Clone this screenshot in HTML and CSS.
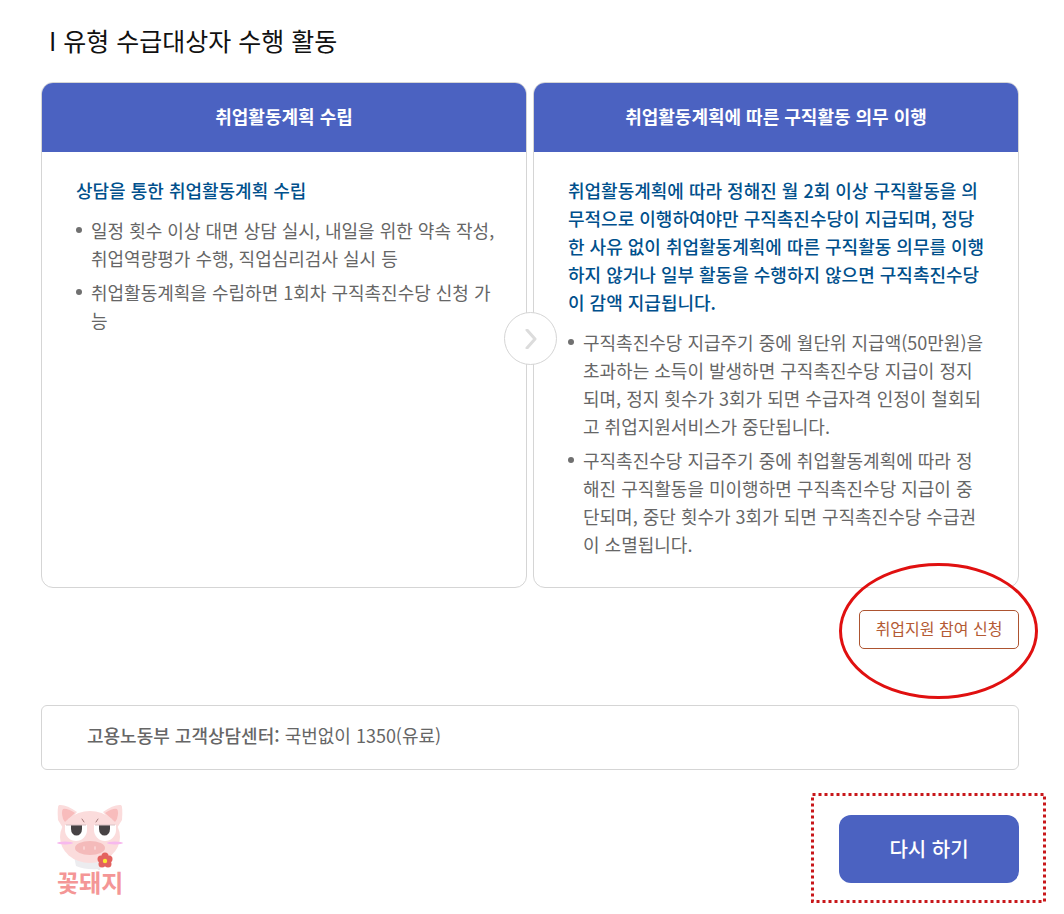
FILE: index.html
```html
<!DOCTYPE html>
<html lang="ko">
<head>
    <meta charset="UTF-8">
    <meta name="viewport" content="width=device-width, initial-scale=1.0">
    <title>I 유형 수급대상자 수행 활동</title>
    <link rel="stylesheet" href="styles.css">
</head>
<body>
    <main>
        <h1>I 유형 수급대상자 수행 활동</h1>

        <div class="steps">
            <section class="card">
                <h2>취업활동계획 수립</h2>
                <div class="card-body">
                    <p class="lead">상담을 통한 취업활동계획 수립</p>
                    <ul>
                        <li>일정 횟수 이상 대면 상담 실시, 내일을 위한 약속 작성, 취업역량평가 수행, 직업심리검사 실시 등</li>
                        <li>취업활동계획을 수립하면 1회차 구직촉진수당 신청 가능</li>
                    </ul>
                </div>
            </section>
            <section class="card">
                <h2>취업활동계획에 따른 구직활동 의무 이행</h2>
                <div class="card-body">
                    <p class="lead">취업활동계획에 따라 정해진 월 2회 이상 구직활동을 의무적으로 이행하여야만 구직촉진수당이 지급되며, 정당한 사유 없이 취업활동계획에 따른 구직활동 의무를 이행하지 않거나 일부 활동을 수행하지 않으면 구직촉진수당이 감액 지급됩니다.</p>
                    <ul>
                        <li>구직촉진수당 지급주기 중에 월단위 지급액(50만원)을 초과하는 소득이 발생하면 구직촉진수당 지급이 정지되며, 정지 횟수가 3회가 되면 수급자격 인정이 철회되고 취업지원서비스가 중단됩니다.</li>
                        <li>구직촉진수당 지급주기 중에 취업활동계획에 따라 정해진 구직활동을 미이행하면 구직촉진수당 지급이 중단되며, 중단 횟수가 3회가 되면 구직촉진수당 수급권이 소멸됩니다.</li>
                    </ul>
                </div>
            </section>
            <span class="arrow">
                <svg width="12" height="20" viewBox="0 0 12 20" fill="none" stroke="#dcdcdc" stroke-width="3" stroke-linecap="round" stroke-linejoin="round"><path d="M2 1l8 9-8 9"/></svg>
            </span>
        </div>

        <div class="apply">
            <div class="apply-wrap">
                <button type="button" class="btn-apply">취업지원 참여 신청</button>
                <span class="circle-mark"></span>
            </div>
        </div>

        <div class="info"><strong>고용노동부 고객상담센터:</strong> 국번없이 1350(유료)</div>

        <div class="bottom">
            <div class="pig">
                <svg width="66" height="66" viewBox="0 0 66 66">
                    <path d="M17 52l2 10q10 4 22 3l-1 2 3-1 3-12z" fill="#ececef"/>
                    <path d="M1 16Q0 2 2 1q7-1 18 7L6 24z" fill="#fbdcdc"/>
                    <path d="M65 16Q66 2 64 1q-7-1-18 7l14 16z" fill="#fbdcdc"/>
                    <path d="M6 15Q4 7 6 5q4-1 12 4L8 18z" fill="#f8bcbc"/>
                    <path d="M60 15q2-8 0-10-4-1-12 4l10 9z" fill="#f8bcbc"/>
                    <ellipse cx="33" cy="33" rx="30" ry="26" fill="#fbdcdc"/>
                    <path d="M8 21h22v5a11 11 0 0 1-22 0zM37 21h22v5a11 11 0 0 1-22 0z" fill="#fff"/>
                    <path d="M14 21h11v4a5 6 0 0 1-11 0zM42 21h11v4a5 6 0 0 1-11 0z" fill="#474345"/>
                    <path d="M9 21h20M38 21h20" stroke="#d9c3c5" stroke-width="1"/>
                    <path d="M25 15l2 3M41 15l-2 3" stroke="#a57c7c" stroke-width="1" stroke-linecap="round"/>
                    <ellipse cx="8" cy="39" rx="8" ry="1.5" fill="#f7b9ee"/>
                    <ellipse cx="58" cy="39" rx="8" ry="1.5" fill="#f7b9ee"/>
                    <ellipse cx="33" cy="44" rx="15" ry="7" fill="#f4baba"/>
                    <ellipse cx="27" cy="44" rx="1" ry="2" fill="#fbd5d5"/>
                    <ellipse cx="38" cy="44" rx="1" ry="2" fill="#fbd5d5"/>
                    <g fill="#e3625f">
                        <circle cx="48" cy="52" r="3.5"/>
                        <circle cx="52" cy="55" r="3.5"/>
                        <circle cx="51" cy="60" r="3.5"/>
                        <circle cx="45" cy="60" r="3.5"/>
                        <circle cx="44" cy="55" r="3.5"/>
                    </g>
                    <circle cx="48" cy="57" r="2.2" fill="#fbe734"/>
                </svg>
                <span>꽃돼지</span>
            </div>
            <div class="retry-wrap">
                <button type="button" class="btn-retry">다시 하기</button>
                <svg class="dots"><rect x="1.5" y="1.5" width="100%" height="100%"/></svg>
            </div>
        </div>
    </main>
</body>
</html>
```
FILE: styles.css
```css
* {
    box-sizing: border-box;
}

body {
    margin: 0;
    background: #fff;
    color: #666;
    font-family: "Noto Sans CJK KR", sans-serif;
    font-size: 18px;
    line-height: 28px;
}

main {
    padding: 22px 45px 0 41px;
}

h1 {
    margin: 0 0 24px;
    padding-left: 8px;
    color: #111;
    font-size: 25px;
    font-weight: 400;
    line-height: 36px;
}

.steps {
    position: relative;
    display: grid;
    grid-template-columns: 1fr 1fr;
    gap: 6px;
}

.card {
    border: 1px solid #d5d5d5;
    border-radius: 12px;
    overflow: hidden;
}

.card h2 {
    margin: 0;
    padding: 19px 0 22px;
    background: #4b62c1;
    color: #fff;
    font-size: 18px;
    font-weight: 700;
    text-align: center;
}

.card-body {
    padding: 24px 30px 29px 34px;
}

.lead {
    margin: 0 0 12px;
    color: #00508c;
    font-weight: 500;
}

.card ul {
    margin: 0;
    padding: 0;
    list-style: none;
}

.card li {
    position: relative;
    padding-left: 15px;
}

.card li + li {
    margin-top: 6px;
}

.card li::before {
    content: "";
    position: absolute;
    left: 0;
    top: 11px;
    width: 6px;
    height: 6px;
    border-radius: 50%;
    background: #707070;
}

.arrow {
    position: absolute;
    top: 230px;
    left: 50%;
    display: flex;
    align-items: center;
    justify-content: center;
    width: 53px;
    height: 53px;
    margin-left: -26px;
    border: 1px solid #d5d5d5;
    border-radius: 50%;
    background: #fff;
}

.apply {
    display: flex;
    justify-content: flex-end;
    margin: 22px 0 56px;
}

.apply-wrap,
.retry-wrap {
    position: relative;
}

button {
    display: block;
    font-family: inherit;
    cursor: pointer;
}

.btn-apply {
    width: 160px;
    height: 39px;
    padding: 0 0 4px;
    border: 1px solid #ad5430;
    border-radius: 5px;
    background: #fff;
    color: #b45a34;
    font-size: 16px;
}

.circle-mark {
    position: absolute;
    top: -47px;
    left: -20px;
    width: 199px;
    height: 136px;
    border: 3px solid #e01010;
    border-radius: 50%;
    pointer-events: none;
}

.info {
    padding: 15px 45px 20px;
    border: 1px solid #d5d5d5;
    border-radius: 6px;
}

.info strong {
    font-weight: 500;
}

.bottom {
    display: flex;
    justify-content: space-between;
    align-items: flex-start;
    padding: 34px 0 16px 16px;
}

.pig {
    display: flex;
    flex-direction: column;
    color: #f49696;
    font-size: 24px;
    font-weight: 700;
    line-height: 24px;
}

.retry-wrap {
    margin-top: 11px;
}

.btn-retry {
    width: 180px;
    height: 68px;
    padding: 0 0 2px;
    border: 0;
    border-radius: 12px;
    background: #4b62c1;
    color: #fff;
    font-size: 20px;
    font-weight: 500;
}

.dots {
    position: absolute;
    top: -22px;
    left: -28px;
    width: 232px;
    height: 107px;
    overflow: visible;
    fill: none;
    stroke: #c8171a;
    stroke-width: 3;
    stroke-dasharray: 3 3;
    pointer-events: none;
}
```
